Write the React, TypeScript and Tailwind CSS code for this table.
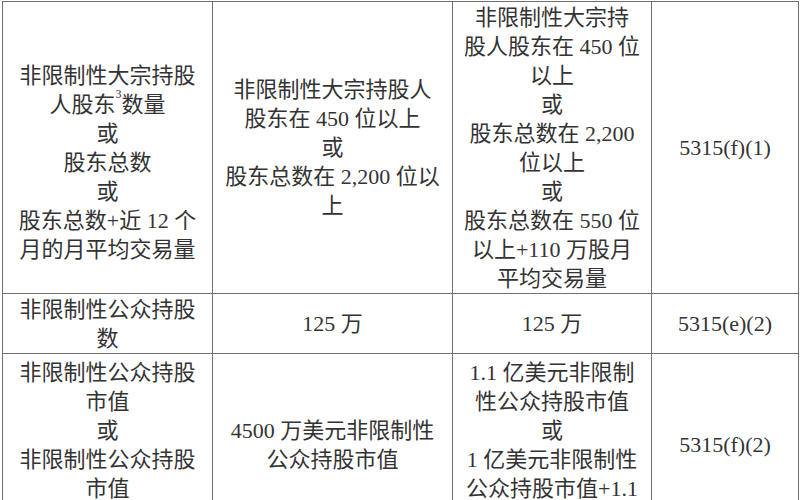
import React from "react";

type Line = React.ReactNode;

function Cell({
  lines,
  className = "",
}: {
  lines: Line[];
  className?: string;
}) {
  return (
    <td
      className={`border border-[#6f6f6f] p-0 align-middle text-center ${className}`}
    >
      {lines.map((l, i) => (
        <div key={i} className="whitespace-nowrap leading-[29px]">
          {l}
        </div>
      ))}
    </td>
  );
}

export default function App() {
  return (
    <div
      className="w-[800px] h-[500px] overflow-hidden bg-white pl-[2px] pt-[1px] text-[22px] text-[#333333]"
      style={{
        fontFamily:
          '"Liberation Serif", "Noto Sans CJK SC", serif',
      }}
    >
      <table className="border-collapse table-fixed w-[796px]">
        <colgroup>
          <col className="w-[210px]" />
          <col className="w-[240px]" />
          <col className="w-[199px]" />
          <col className="w-[147px]" />
        </colgroup>
        <tbody>
          <tr className="h-[292px]">
            <Cell
              className="pt-[30px]"
              lines={[
                "非限制性大宗持股",
                <>
                  人股东<sup className="text-[12px] align-[8px]">3</sup>数量
                </>,
                "或",
                "股东总数",
                "或",
                "股东总数+近 12 个",
                "月的月平均交易量",
              ]}
            />
            <Cell
              lines={[
                "非限制性大宗持股人",
                "股东在 450 位以上",
                "或",
                "股东总数在 2,200 位以",
                "上",
              ]}
            />
            <Cell
              lines={[
                "非限制性大宗持",
                "股人股东在 450 位",
                "以上",
                "或",
                "股东总数在 2,200",
                "位以上",
                "或",
                "股东总数在 550 位",
                "以上+110 万股月",
                "平均交易量",
              ]}
            />
            <Cell lines={["5315(f)(1)"]} />
          </tr>
          <tr className="h-[60px]">
            <Cell lines={["非限制性公众持股", "数"]} className="leading-[27px]" />
            <Cell lines={["125 万"]} />
            <Cell lines={["125 万"]} />
            <Cell lines={["5315(e)(2)"]} />
          </tr>
          <tr className="h-[182px]">
            <Cell
              lines={[
                "非限制性公众持股",
                "市值",
                "或",
                "非限制性公众持股",
                "市值",
                "+股东权益",
              ]}
            />
            <Cell lines={["4500 万美元非限制性", "公众持股市值"]} />
            <Cell
              lines={[
                "1.1 亿美元非限制",
                "性公众持股市值",
                "或",
                "1 亿美元非限制性",
                "公众持股市值+1.1",
                "亿美元股东权益",
              ]}
            />
            <Cell lines={["5315(f)(2)"]} />
          </tr>
        </tbody>
      </table>
    </div>
  );
}
